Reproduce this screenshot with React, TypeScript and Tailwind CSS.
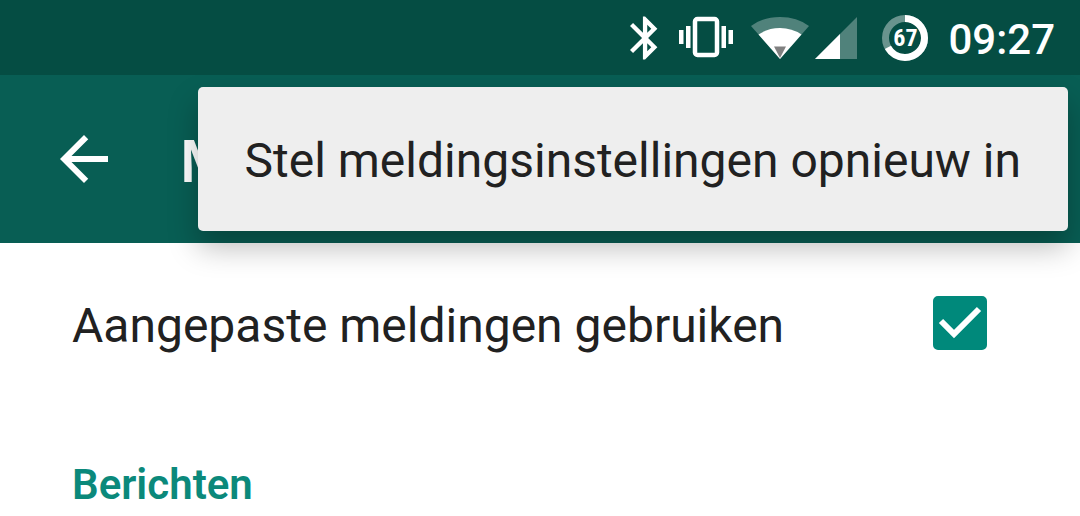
import { useState } from "react";

const BluetoothIcon = () => (
  <svg width="28" height="44" viewBox="5 2 13 20" fill="#fff" aria-hidden="true">
    <path d="M17.71 7.71L12 2h-1v7.59L6.41 5 5 6.41 10.59 12 5 17.59 6.41 19 11 14.41V22h1l5.71-5.71-4.3-4.29 4.3-4.29zM13 5.83l1.88 1.88L13 9.59V5.83zm1.88 10.46L13 18.17v-3.76l1.88 1.88z" />
  </svg>
);

const VibrateIcon = () => (
  <svg width="54" height="44" viewBox="0 0 54 44" fill="#fff" aria-hidden="true">
    <rect x="0" y="14" width="4.5" height="14" />
    <rect x="7" y="10" width="4.5" height="22" />
    <rect x="16" y="3" width="22" height="36" rx="2.5" fill="none" stroke="#fff" strokeWidth="4.5" />
    <rect x="42.5" y="10" width="4.5" height="22" />
    <rect x="49.5" y="14" width="4.5" height="14" />
  </svg>
);

const WifiIcon = () => (
  <svg width="58" height="44" viewBox="0 0 58 44" aria-hidden="true">
    <path d="M29 43L0 10Q12 1 29 1T58 10Z" fill="#fff" opacity="0.3" />
    <path d="M29 43L7.5 18.500Q17 12 29 12T50.5 18.500Z" fill="#fff" />
    <path d="M29 42L23 30.5H35Z" fill="#808080" />
  </svg>
);

const SignalIcon = () => (
  <svg width="42" height="44" viewBox="0 0 42 44" fill="#fff" aria-hidden="true">
    <path d="M0 43L42 1V43Z" opacity="0.3" />
    <path d="M0 43L25 18V43Z" />
  </svg>
);

const Battery = ({ level }: { level: number }) => (
  <div className="grid h-[46px] w-[46px] place-items-center text-2xl font-bold leading-none">
    <svg className="col-start-1 row-start-1" width="46" height="46" viewBox="0 0 46 46" fill="none" strokeWidth="7" aria-hidden="true">
      <circle cx="23" cy="23" r="19.5" stroke="#fff" strokeOpacity="0.4" />
      <circle
        cx="23"
        cy="23"
        r="19.5"
        stroke="#fff"
        pathLength="100"
        strokeDasharray={`${level} 100`}
        transform="rotate(-90 23 23)"
      />
    </svg>
    <span className="col-start-1 row-start-1 font-['Roboto_Condensed','Roboto',sans-serif]">{level}</span>
  </div>
);

const StatusBar = () => (
  <div className="relative z-20 flex h-[75px] items-center justify-end bg-[#054d43] pr-[25px] text-white">
    <div className="flex items-center">
      <BluetoothIcon />
      <div className="ml-[21px]">
        <VibrateIcon />
      </div>
      <div className="ml-[18px]">
        <WifiIcon />
      </div>
      <div className="ml-1.5">
        <SignalIcon />
      </div>
      <div className="ml-[25px]">
        <Battery level={67} />
      </div>
    </div>
    <time className="ml-5 pt-1 text-[42px] font-medium leading-none">09:27</time>
  </div>
);

const App = () => {
  const [custom, setCustom] = useState(true);

  return (
    <div className="relative w-full overflow-hidden bg-white font-['Roboto',sans-serif] text-[#212121]">
      <StatusBar />

      <header className="flex h-[168px] items-center bg-[#085e54] pl-[60px]">
        <button type="button" aria-label="Terug" className="h-12 w-12">
          <svg width="48" height="48" viewBox="4 4 16 16" fill="#fff" aria-hidden="true">
            <path d="M20 11H7.83l5.59-5.59L12 4l-8 8 8 8 1.41-1.41L7.83 13H20v-2z" />
          </svg>
        </button>
        <h1 className="ml-[72px] pt-1.5 text-[60px] font-medium leading-none text-white">M</h1>
      </header>

      {/* Overflow menu */}
      <div
        role="menu"
        className="absolute right-3 top-[87px] z-10 rounded-[5px] bg-[#eeeeee] shadow-[0_16px_30px_rgba(0,0,0,0.27)]"
      >
        <button
          type="button"
          role="menuitem"
          className="h-36 whitespace-nowrap px-[47px] pt-1 text-5xl leading-none"
        >
          Stel meldingsinstellingen opnieuw in
        </button>
      </div>

      <main>
        <label className="flex h-40 items-center justify-between pl-[72px] pr-[93px]">
          <span className="pt-1.5 text-5xl leading-none">Aangepaste meldingen gebruiken</span>
          <span className="grid h-[54px] w-[54px]">
            <input
              type="checkbox"
              checked={custom}
              onChange={(e) => setCustom(e.target.checked)}
              className="col-start-1 row-start-1 appearance-none rounded-[5px] border-[5px] border-[#757575] checked:border-[#00897b] checked:bg-[#00897b]"
            />
            {custom && (
              <svg
                className="pointer-events-none col-start-1 row-start-1"
                width="54"
                height="54"
                viewBox="0 0 54 54"
                fill="none"
                stroke="#fff"
                strokeWidth="6"
                aria-hidden="true"
              >
                <path d="M8 25L21 38L46 13" />
              </svg>
            )}
          </span>
        </label>

        <section className="px-[72px] pt-[61px] pb-2.5">
          <h2 className="text-[42px] font-semibold leading-none text-[#0b897b]">Berichten</h2>
        </section>
      </main>
    </div>
  );
};

export default App;
